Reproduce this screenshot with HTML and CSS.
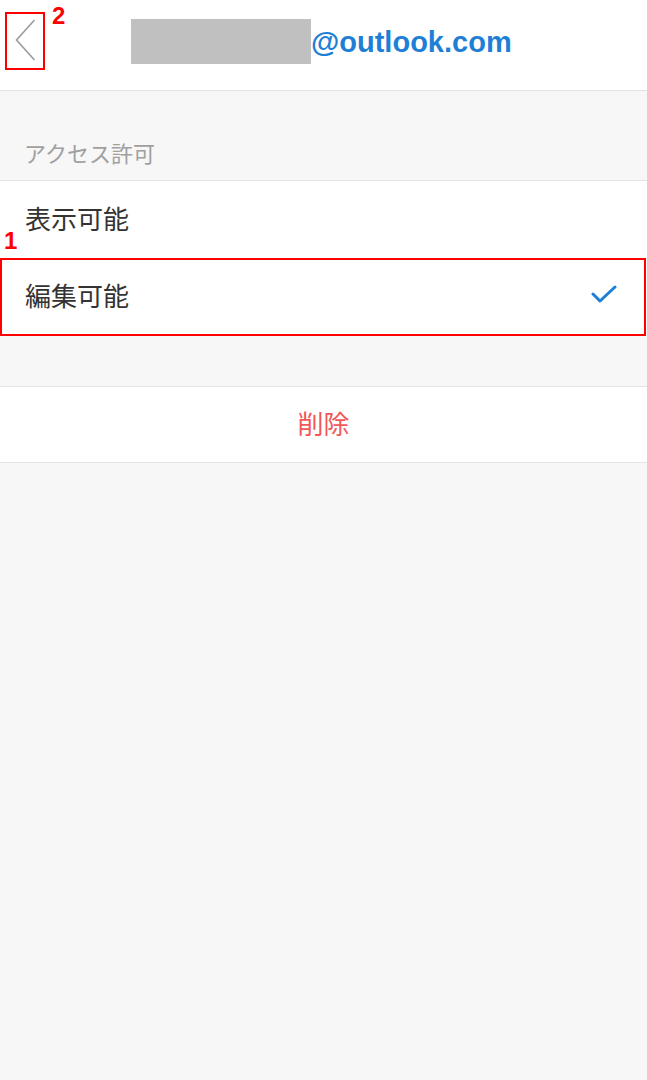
FILE: index.html
```html
<!DOCTYPE html>
<html lang="ja">

<head>
   <meta charset="UTF-8">
   <meta name="viewport" content="width=device-width, initial-scale=1.0">
   <title>アクセス許可</title>
   <link rel="stylesheet" href="styles.css">
</head>

<body>
   <header class="top-bar">
      <button class="back-btn" aria-label="戻る">
         <svg width="22" height="44" viewBox="0 0 22 44">
            <polyline points="19.5,1 1.5,21 19.5,41" fill="none" stroke="#9a9a9a" stroke-width="1.6" />
         </svg>
         <span class="mark-box back-mark"></span>
         <span class="mark-num num-2">2</span>
      </button>
      <div class="account">
         <span class="masked"></span><span class="domain">@outlook.com</span>
      </div>
   </header>

   <div class="section-label">アクセス許可</div>

   <ul class="option-list">
      <li class="option">表示可能</li>
      <li class="option selected">
         <span>編集可能</span>
         <svg class="check" width="26" height="20" viewBox="0 0 26 20">
            <polyline points="2,9 9,16 24,2" fill="none" stroke="#1f7fd6" stroke-width="3" stroke-linecap="round" stroke-linejoin="round" />
         </svg>
         <span class="mark-box row-mark"></span>
         <span class="mark-num num-1">1</span>
      </li>
   </ul>

   <div class="delete-row">削除</div>
</body>

</html>
```

FILE: styles.css
```css
body {
   margin: 0;
   background-color: #f7f7f7;
   font-family: "Noto Sans CJK JP", "Liberation Sans", sans-serif;
   color: #333;
}

/* header */
.top-bar {
   height: 90px;
   box-sizing: content-box;
   padding-bottom: 0;
   background-color: #fff;
   border-bottom: 1px solid #e2e2e2;
   display: flex;
   align-items: flex-start;
}

.back-btn {
   position: relative;
   width: 40px;
   height: 58px;
   margin: 12px 0 0 5px;
   padding: 0 0 0 10px;
   border: none;
   background: none;
   display: flex;
   align-items: center;
   justify-content: flex-start;
   box-sizing: border-box;
}

.account {
   margin: 19px 0 0 86px;
   display: flex;
   align-items: center;
}

.masked {
   display: block;
   width: 180px;
   height: 45px;
   background-color: #c0c0c0;
}

.domain {
   font-family: "Liberation Sans", Arial, sans-serif;
   font-weight: bold;
   font-size: 29px;
   color: #1f7fd6;
   margin-top: 1px;
}

/* list */
.section-label {
   height: 89px;
   box-sizing: border-box;
   padding: 46px 0 0 24px;
   font-size: 22px;
   line-height: 30px;
   color: #a0a0a0;
}

.option-list {
   list-style: none;
   margin: 0;
   padding: 0;
   background-color: #fff;
   border-top: 1px solid #e4e4e4;
   border-bottom: 1px solid #e4e4e4;
}

.option {
   position: relative;
   height: 77px;
   box-sizing: border-box;
   display: flex;
   align-items: center;
   justify-content: space-between;
   padding: 0 30px 5px 25px;
   font-size: 26px;
}

.check {
   margin-top: 2px;
}

.delete-row {
   margin-top: 50px;
   height: 77px;
   box-sizing: border-box;
   padding-bottom: 4px;
   background-color: #fff;
   border-top: 1px solid #e4e4e4;
   border-bottom: 1px solid #e4e4e4;
   display: flex;
   align-items: center;
   justify-content: center;
   font-size: 26px;
   color: #f25757;
}

/* red annotation marks */
.mark-box {
   position: absolute;
   border: 2px solid #f00;
   box-sizing: border-box;
   pointer-events: none;
}

.back-mark {
   left: 0;
   top: 0;
   width: 40px;
   height: 58px;
}

.row-mark {
   left: 0;
   top: 0;
   right: 1px;
   bottom: -1px;
}

.mark-num {
   position: absolute;
   font-family: "Liberation Sans", Arial, sans-serif;
   font-weight: bold;
   font-size: 24px;
   line-height: 24px;
   color: #f00;
}

.num-2 {
   left: 47px;
   top: -8px;
}

.num-1 {
   left: 4px;
   top: -29px;
}
```
